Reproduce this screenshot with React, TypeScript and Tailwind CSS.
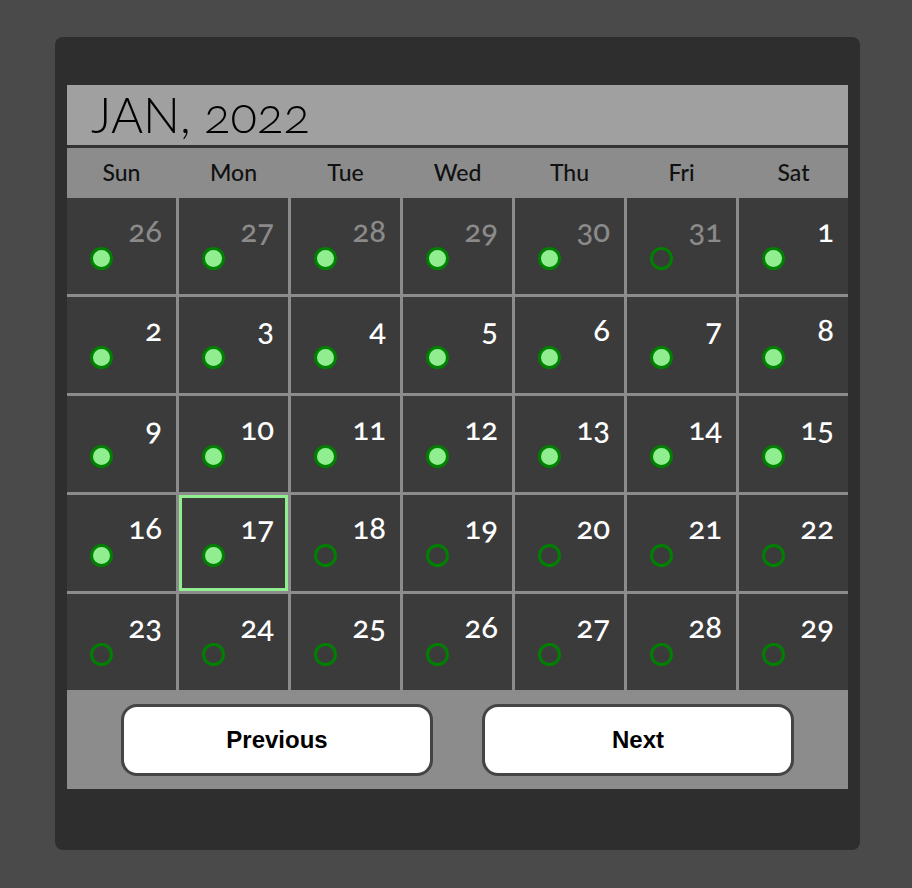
import React from "react";

type Day = { n: number; other?: boolean; filled: boolean; selected?: boolean };

const days: Day[] = [
  { n: 26, other: true, filled: true },
  { n: 27, other: true, filled: true },
  { n: 28, other: true, filled: true },
  { n: 29, other: true, filled: true },
  { n: 30, other: true, filled: true },
  { n: 31, other: true, filled: false },
  { n: 1, filled: true },
  ...[2, 3, 4, 5, 6, 7, 8, 9, 10, 11, 12, 13, 14, 15, 16].map((n) => ({ n, filled: true })),
  { n: 17, filled: true, selected: true },
  ...[18, 19, 20, 21, 22, 23, 24, 25, 26, 27, 28, 29].map((n) => ({ n, filled: false })),
];

const weekdays = ["Sun", "Mon", "Tue", "Wed", "Thu", "Fri", "Sat"];

export default function App() {
  return (
    <div className="min-h-[888px] w-full bg-[#4a4a4a] pt-[37px] pl-[55px] font-['Lato',sans-serif]">
      <div className="w-[805px] h-[813px] rounded-[8px] bg-[#2e2e2e] pt-[48px] px-[12px]">
        <div className="bg-[#8c8c8c]">
          <div className="h-[63px] bg-[#a0a0a0] border-b-[3px] border-[#333333] pl-[24px] text-[49px] leading-[59px] font-light text-black oldstyle-nums">
            JAN, 2022
          </div>
          <div className="grid grid-cols-7 gap-[3px] h-[50px] items-center">
            {weekdays.map((w) => (
              <div key={w} className="text-center text-[23px] font-medium text-[#111] -mt-[2px]">
                {w}
              </div>
            ))}
          </div>
          <div className="grid grid-cols-7 gap-[3px]">
            {days.map((d, i) => (
              <div
                key={i}
                className={
                  "h-[96px] bg-[#3b3b3b] pt-[14px] pr-[14px] pl-[23px] " +
                  (d.selected ? "outline-[3px] outline-solid outline-[#90ee90] -outline-offset-[3px]" : "")
                }
              >
                <div
                  className={
                    "h-[35px] leading-[36px] text-right text-[31px] font-medium oldstyle-nums " +
                    (d.other ? "text-[#8a8a8a]" : "text-white")
                  }
                >
                  {d.n}
                </div>
                <div
                  className={
                    "w-[23px] h-[23px] rounded-full border-[3px] border-[#008000] " +
                    (d.filled ? "bg-[#90ee90]" : "bg-transparent")
                  }
                />
              </div>
            ))}
          </div>
          <div className="h-[99px] flex items-center pl-[54px] gap-[49px]">
            <button className="w-[312px] h-[72px] bg-white border-[3px] border-[#444444] rounded-[16px] text-[24px] font-bold text-black font-['Liberation_Sans',Arial,sans-serif]">
              Previous
            </button>
            <button className="w-[312px] h-[72px] bg-white border-[3px] border-[#444444] rounded-[16px] text-[24px] font-bold text-black font-['Liberation_Sans',Arial,sans-serif]">
              Next
            </button>
          </div>
        </div>
      </div>
    </div>
  );
}
